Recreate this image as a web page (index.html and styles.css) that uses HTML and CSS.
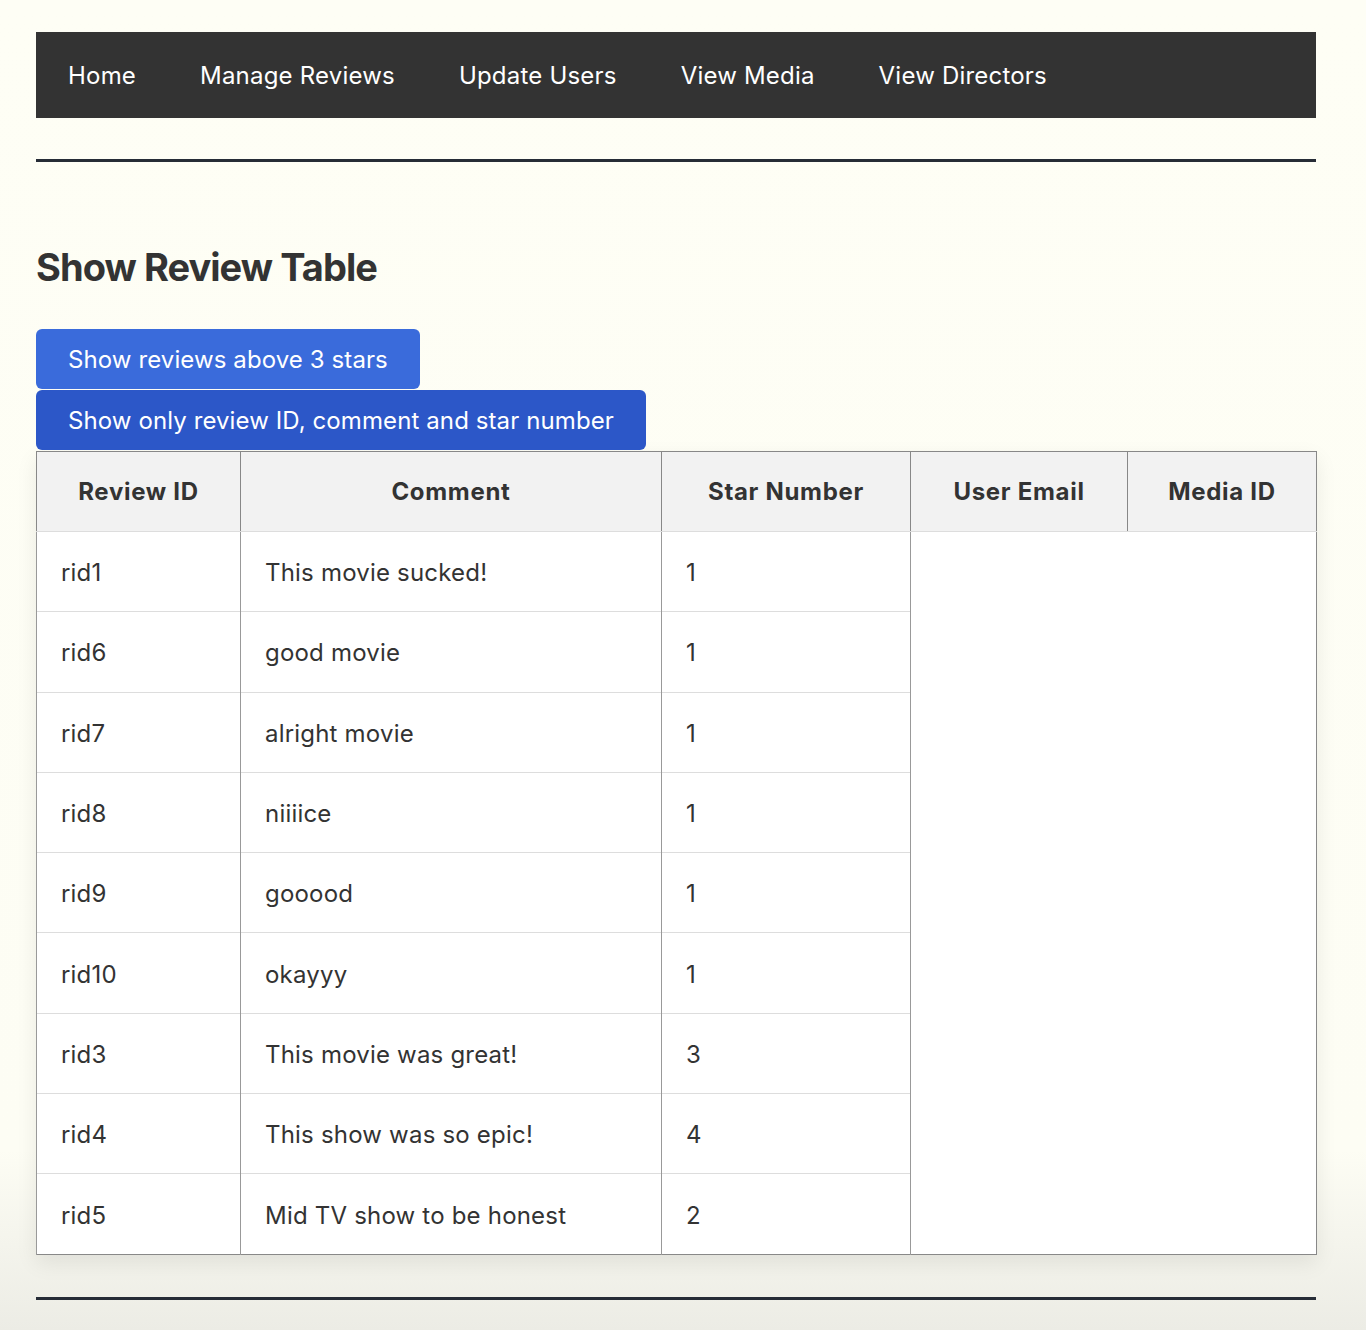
FILE: index.html
```html
<!DOCTYPE html>
<html lang="en">
<head>
<meta charset="utf-8">
<title>Show Review Table</title>
<link rel="stylesheet" href="styles.css">
</head>
<body>
<div class="page">
  <nav class="nav">
    <a href="#">Home</a>
    <a href="#">Manage Reviews</a>
    <a href="#">Update Users</a>
    <a href="#">View Media</a>
    <a href="#">View Directors</a>
  </nav>
  <hr class="rule rule-top">
  <h2 class="title">Show Review Table</h2>
  <div class="buttons">
    <button class="btn btn-light">Show reviews above 3 stars</button>
    <button class="btn btn-dark">Show only review ID, comment and star number</button>
  </div>
  <table class="reviews">
    <thead>
      <tr>
        <th class="c-id">Review ID</th>
        <th class="c-comment">Comment</th>
        <th class="c-star">Star Number</th>
        <th class="c-email">User Email</th>
        <th class="c-media">Media ID</th>
      </tr>
    </thead>
    <tbody>
      <tr><td>rid1</td><td>This movie sucked!</td><td>1</td></tr>
      <tr><td>rid6</td><td>good movie</td><td>1</td></tr>
      <tr><td>rid7</td><td>alright movie</td><td>1</td></tr>
      <tr><td>rid8</td><td>niiiice</td><td>1</td></tr>
      <tr><td>rid9</td><td>gooood</td><td>1</td></tr>
      <tr><td>rid10</td><td>okayyy</td><td>1</td></tr>
      <tr><td>rid3</td><td>This movie was great!</td><td>3</td></tr>
      <tr><td>rid4</td><td>This show was so epic!</td><td>4</td></tr>
      <tr><td>rid5</td><td>Mid TV show to be honest</td><td>2</td></tr>
    </tbody>
  </table>
  <hr class="rule rule-bottom">
</div>
</body>
</html>
```
FILE: styles.css
```css
html {
  background: linear-gradient(to bottom, #fefef5 0, #fdfdf4 1150px, #ecece5 1330px);
  min-height: 1330px;
}
body {
  margin: 0;
  font-family: Inter, "Noto Sans", sans-serif;
  font-size: 24px;
  color: #333333;
}
.page {
  width: 1280px;
  margin-left: 36px;
  padding-top: 32px;
}
.nav {
  display: flex;
  height: 86px;
  align-items: center;
  background: #333333;
}
.nav a {
  color: #ffffff;
  text-decoration: none;
  padding: 2px 32px 0;
  line-height: 84px;
  letter-spacing: 0.2px;
}
.rule {
  border: 0;
  height: 3px;
  background: #262c36;
  margin: 0;
}
.rule-top {
  margin-top: 41px;
}
.title {
  font-size: 38px;
  font-weight: 700;
  margin: 81px 0 0;
  line-height: 48px;
  letter-spacing: -0.95px;
  color: #333333;
}
.buttons {
  display: flex;
  flex-direction: column;
  align-items: flex-start;
  margin-top: 38px;
  gap: 1px;
}
.btn {
  font-family: inherit;
  font-size: 24px;
  letter-spacing: 0.1px;
  color: #ffffff;
  border: 0;
  border-radius: 6px;
  height: 60px;
  padding: 0 32px;
  cursor: pointer;
}
.btn-light {
  background: #3a6bdb;
}
.btn-dark {
  background: #2c57c8;
}
.reviews {
  width: 1280px;
  margin-top: 1px;
  border-collapse: collapse;
  background: #ffffff;
  border: 1px solid #888888;
  box-shadow: 0 8px 20px rgba(0, 0, 0, 0.08);
  table-layout: fixed;
}
.reviews th {
  background: #f2f2f2;
  font-weight: 700;
  height: 80px;
  padding: 0 24px;
  text-align: center;
  letter-spacing: 0.7px;
  border-left: 1px solid #888888;
  border-right: 1px solid #888888;
  border-bottom: 1px solid #dddddd;
  box-sizing: border-box;
}
.reviews tbody tr {
  height: 80.3px;
}
.reviews td {
  padding: 2px 24px 0;
  text-align: left;
  letter-spacing: 0.2px;
  border-left: 1px solid #999999;
  border-right: 1px solid #999999;
  border-top: 1px solid #dddddd;
  box-sizing: border-box;
}
.c-id { width: 204px; }
.c-comment { width: 421px; }
.c-star { width: 249px; }
.c-email { width: 217px; }
.c-media { width: 189px; }
.rule-bottom {
  margin-top: 42px;
}
```
